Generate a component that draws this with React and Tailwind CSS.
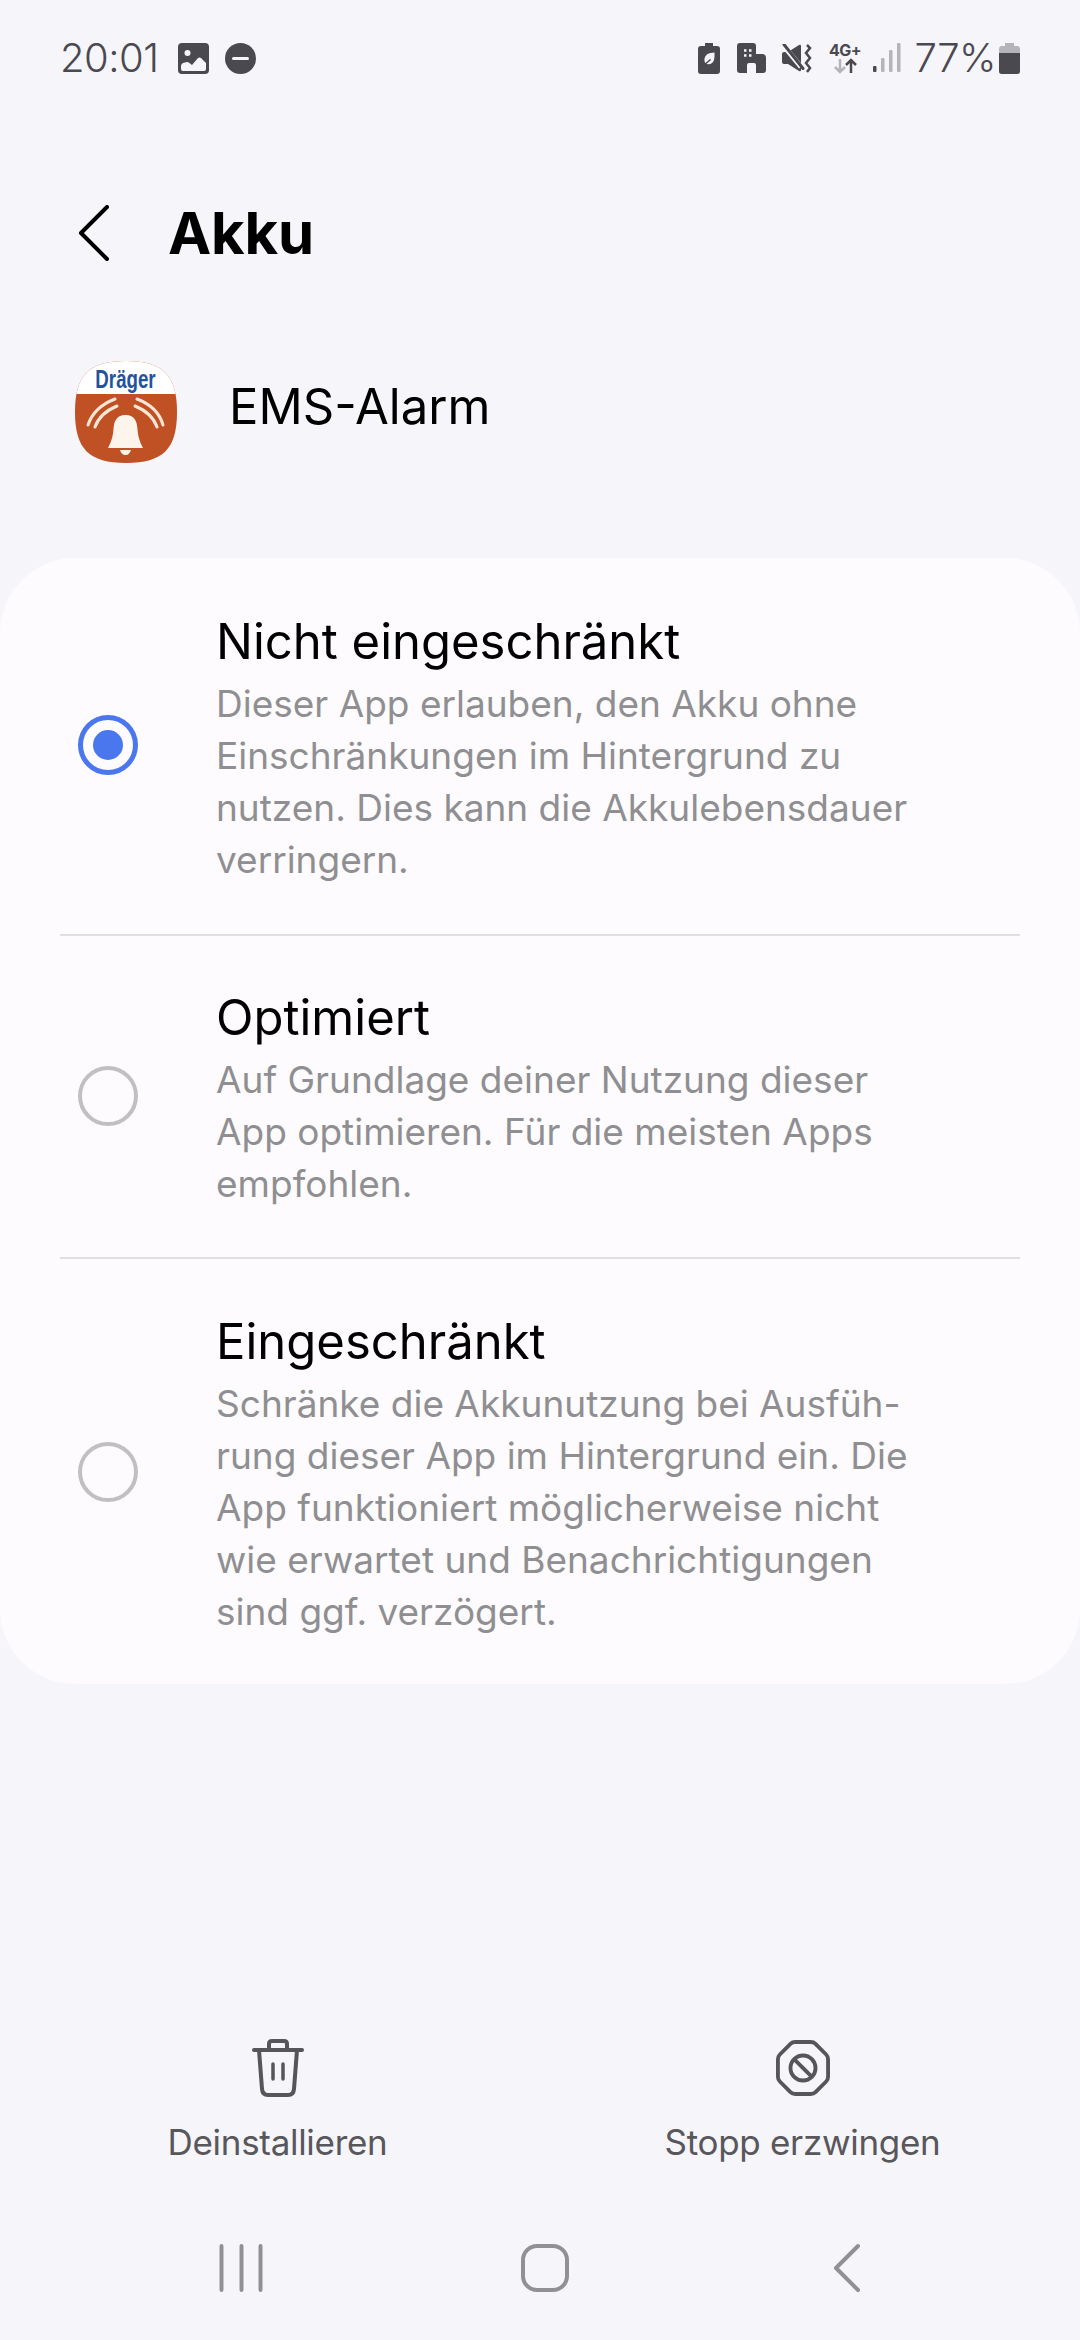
import React from "react";

const options = [
  {
    title: "Nicht eingeschränkt",
    lines: [
      "Dieser App erlauben, den Akku ohne",
      "Einschränkungen im Hintergrund zu",
      "nutzen. Dies kann die Akkulebensdauer",
      "verringern.",
    ],
    selected: true,
    row: "pt-[55px] pb-[48px]",
  },
  {
    title: "Optimiert",
    lines: [
      "Auf Grundlage deiner Nutzung dieser",
      "App optimieren. Für die meisten Apps",
      "empfohlen.",
    ],
    row: "pt-[53px] pb-[47px] border-t-[2px] border-[#dfdee1]",
  },
  {
    title: "Eingeschränkt",
    lines: [
      "Schränke die Akkunutzung bei Ausfüh-",
      "rung dieser App im Hintergrund ein. Die",
      "App funktioniert möglicherweise nicht",
      "wie erwartet und Benachrichtigungen",
      "sind ggf. verzögert.",
    ],
    row: "pt-[54px] pb-[46px] border-t-[2px] border-[#dfdee1]",
  },
];

function StatusBar() {
  return (
    <div className="flex justify-between items-center h-[40px] mt-[38px] pl-[60px] pr-[60px] text-[#4a494f]">
      <div className="flex items-center">
        <span className="text-[40px] leading-none tracking-[-0.5px] font-light">20:01</span>
        <svg className="ml-[19px]" width="31" height="31" viewBox="0 0 31 31">
          <rect width="31" height="31" rx="4" fill="#4a494f" />
          <circle cx="9.5" cy="10" r="3" fill="#f6f5fa" />
          <path d="M3 26 v-3 q0 -2 2 -3 l4 -1 q2 0 3 1.5 l2 1.5 l6 -7 q1.5 -1 3 0 l5 5 v6 q0 2 -2 2 h-21 q-2 0 -2 -2z" fill="#f6f5fa" />
        </svg>
        <svg className="ml-[16px]" width="31" height="31" viewBox="0 0 31 31">
          <circle cx="15.5" cy="15.5" r="15.5" fill="#4a494f" />
          <rect x="7" y="14" width="17" height="3" rx="1.5" fill="#f6f5fa" />
        </svg>
      </div>
      <div className="flex items-center">
        <svg width="22" height="31" viewBox="0 0 22 31">
          <path d="M7 0 h8 v3 h4 q3 0 3 3 v22 q0 3 -3 3 h-16 q-3 0 -3 -3 v-22 q0 -3 3 -3 h4z" fill="#4a494f" />
          <path d="M16.5 9.5 q-9 0 -10 6 q-.5 4 2 5.5 q6 1 7.5 -4 q.7 -3 .5 -7.500z" fill="#f6f5fa" />
          <path d="M4.500 23.500 l8 -7" stroke="#4a494f" strokeWidth="1.500" />
        </svg>
        <svg className="ml-[17px]" width="29" height="30" viewBox="0 0 29 30">
          <path d="M3 0 h13 q3 0 3 3 v8 h6 q4 0 4 4 v12 q0 3 -3 3 h-7 v-8 q0 -2 -2 -2 h-5 q-2 0 -2 2 v8 h-7 q-3 0 -3 -3 v-24 q0 -3 3 -3z" fill="#4a494f" />
          <path d="M7 7.500 h2.500 M12 7.500 h2.500 M7 12.500 h2.500 M12 12.500 h2.500" stroke="#f6f5fa" strokeWidth="2.500" />
        </svg>
        <svg className="ml-[16px]" width="30" height="29" viewBox="0 0 30 29">
          <path d="M0 10 q0 -2 2 -2 h4 l11 -7 q2 -1 2 1 v24 q0 2 -2 1 l-11 -7 h-4 q-2 0 -2 -2z" fill="#4a494f" />
          <path d="M1 1 l18 22" stroke="#f6f5fa" strokeWidth="5" />
          <path d="M2 0.500 l19 24" stroke="#4a494f" strokeWidth="3" strokeLinecap="round" />
          <path d="M25 1 l3 3 l-4 5 l4 5 l-4 5 l4 5 l-3 4" stroke="#4a494f" strokeWidth="2.500" fill="none" />
        </svg>
        <div className="ml-[16px] flex flex-col items-center w-[33px] h-[31px] text-[#4a494f]">
          <span className="text-[16px] leading-[15px] font-bold tracking-[-0.5px]">4G+</span>
          <svg width="26" height="16" viewBox="0 0 26 16">
            <path d="M8 1 v13 M3 9 l5 5 l5 -5" stroke="#b5b4b9" strokeWidth="2.500" fill="none" />
            <path d="M19 15 v-13 M14 7 l5 -5 l5 5" stroke="#4a494f" strokeWidth="2.500" fill="none" />
          </svg>
        </div>
        <svg className="ml-[12px]" width="28" height="30" viewBox="0 0 28 30">
          <rect x="0" y="23" width="3.500" height="6" rx="1" fill="#4a494f" />
          <rect x="8" y="15" width="3.500" height="14" rx="1" fill="#b5b4b9" />
          <rect x="16" y="7" width="3.500" height="22" rx="1" fill="#b5b4b9" />
          <rect x="24" y="0" width="3.500" height="29" rx="1" fill="#b5b4b9" />
        </svg>
        <span className="ml-[13px] text-[40px] leading-none tracking-[-0.5px] font-light">77%</span>
        <svg className="ml-[3px]" width="21" height="31" viewBox="0 0 21 31">
          <path d="M6 0 h9 v3 h3 q3 0 3 3 v22 q0 3 -3 3 h-15 q-3 0 -3 -3 v-22 q0 -3 3 -3 h3z" fill="#b5b4b9" />
          <path d="M0 10 h21 v18 q0 3 -3 3 h-15 q-3 0 -3 -3z" fill="#4a494f" />
        </svg>
      </div>
    </div>
  );
}

function AppIcon() {
  return (
    <svg width="102" height="102" viewBox="0 0 102 102">
      <defs>
        <clipPath id="squircle">
          <path d="M51 0 C88 0 102 14 102 51 C102 88 88 102 51 102 C14 102 0 88 0 51 C0 14 14 0 51 0z" />
        </clipPath>
      </defs>
      <g clipPath="url(#squircle)">
        <rect width="102" height="102" fill="#bf5124" />
        <rect width="102" height="33" fill="#ffffff" />
        <path d="M50.500 54 C41 54 39 61 38.500 68 C38 76 36 81 33 87 H68 C65 81 63 76 62.500 68 C62 61 60 54 50.500 54z" fill="#fdf4ec" />
        <path d="M45 89 h11 q-1.500 5 -5.500 5 q-4 0 -5.500 -5z" fill="#fdf4ec" />
        <g stroke="#fbe6d5" strokeWidth="3" fill="none" strokeLinecap="round">
          <path d="M13 64 q6 -18 27 -26" />
          <path d="M20 66 q5 -14 22 -21" />
          <path d="M88 64 q-5 -18 -26 -26" />
          <path d="M82 66 q-5 -14 -22 -21" />
        </g>
      </g>
      <text transform="translate(50.500 27) scale(0.72 1)" textAnchor="middle" fontFamily="Liberation Sans, sans-serif" fontWeight="700" fontSize="26" fill="#24529c">Dräger</text>
    </svg>
  );
}

function Radio({ selected }) {
  if (selected) {
    return (
      <div className="flex justify-center items-center w-[60px] h-[60px] mb-[10px] rounded-full border-[5px] border-[#4a76ee] shrink-0">
        <div className="w-[30px] h-[30px] rounded-full bg-[#4a76ee]" />
      </div>
    );
  }
  return <div className="w-[60px] h-[60px] mb-[8px] rounded-full border-[4px] border-[#c0c0c2] shrink-0" />;
}

export default function App() {
  return (
    <div className="flex flex-col h-[2340px] bg-[#f6f5fa] font-['Inter',sans-serif] overflow-hidden">
      <StatusBar />

      <div className="flex items-center h-[80px] mt-[115px] pl-[78px]">
        <svg width="32" height="56" viewBox="0 0 32 56">
          <path d="M29 2 L3 28 L29 54" stroke="#000" strokeWidth="4" fill="none" strokeLinecap="round" strokeLinejoin="round" />
        </svg>
        <h1 className="ml-[58px] text-[58px] leading-none font-bold text-black tracking-[-0.2px]">Akku</h1>
      </div>

      <div className="flex items-center mt-[88px] pl-[75px]">
        <AppIcon />
        <span className="ml-[52px] mb-[12px] text-[49px] leading-none text-black">EMS-Alarm</span>
      </div>

      <div className="mt-[95px] rounded-[75px] bg-[#fdfbfe]">
        {options.map((opt) => (
          <div key={opt.title} className="px-[60px]">
            <div className={`flex items-center pl-[18px] ${opt.row}`}>
              <Radio selected={opt.selected} />
              <div className="ml-[78px]">
                <div className="text-[49px] leading-[58px] text-black">{opt.title}</div>
                <div className="mt-[7px] text-[37px] leading-[52px] text-[#8f8f92]">
                  {opt.lines.map((line) => (
                    <div key={line}>{line}</div>
                  ))}
                </div>
              </div>
            </div>
          </div>
        ))}
      </div>

      <div className="mt-auto grid grid-cols-2 px-[15px] text-[#58575c]">
        <div className="flex flex-col items-center">
          <svg width="52" height="58" viewBox="0 0 52 58">
            <path d="M2 11 h48" stroke="#56555a" strokeWidth="4" strokeLinecap="round" />
            <path d="M17 11 v-6 q0 -3 3 -3 h12 q3 0 3 3 v6" stroke="#56555a" strokeWidth="4" fill="none" />
            <path d="M7 11 l3 39 q.5 6 6 6 h20 q5.500 0 6 -6 l3 -39" stroke="#56555a" strokeWidth="4" fill="none" />
            <path d="M21 25 v15 M31 25 v15" stroke="#56555a" strokeWidth="3.500" strokeLinecap="round" />
          </svg>
          <span className="mt-[20px] text-[35px] leading-[50px] tracking-[-0.3px]">Deinstallieren</span>
        </div>
        <div className="flex flex-col items-center">
          <svg width="54" height="58" viewBox="0 0 56 58">
            <path d="M20 2 h16 q3 0 5 2 l11 11 q2 2 2 5 v18 q0 3 -2 5 l-11 11 q-2 2 -5 2 h-16 q-3 0 -5 -2 l-11 -11 q-2 -2 -2 -5 v-18 q0 -3 2 -5 l11 -11 q2 -2 5 -2z" stroke="#56555a" strokeWidth="4" fill="none" />
            <circle cx="28" cy="29" r="13" stroke="#56555a" strokeWidth="4" fill="none" />
            <path d="M19 20 l18 18" stroke="#56555a" strokeWidth="4" />
          </svg>
          <span className="mt-[20px] text-[35px] leading-[50px] tracking-[-0.3px]">Stopp erzwingen</span>
        </div>
      </div>

      <div className="flex items-center h-[48px] mt-[77px] mb-[48px] text-[#8f8f93]">
        <svg className="ml-[219px]" width="46" height="48" viewBox="0 0 46 48">
          <path d="M2.500 2 v44 M22.500 2 v44 M41.500 2 v44" stroke="#919195" strokeWidth="4" strokeLinecap="round" />
        </svg>
        <svg className="ml-[256px]" width="48" height="48" viewBox="0 0 48 48">
          <rect x="2" y="2" width="44" height="44" rx="14" stroke="#919195" strokeWidth="4" fill="none" />
        </svg>
        <svg className="ml-[263px]" width="30" height="50" viewBox="0 0 30 50">
          <path d="M26 3 L4 25 L26 47" stroke="#919195" strokeWidth="4" fill="none" strokeLinecap="round" strokeLinejoin="round" />
        </svg>
      </div>
    </div>
  );
}
